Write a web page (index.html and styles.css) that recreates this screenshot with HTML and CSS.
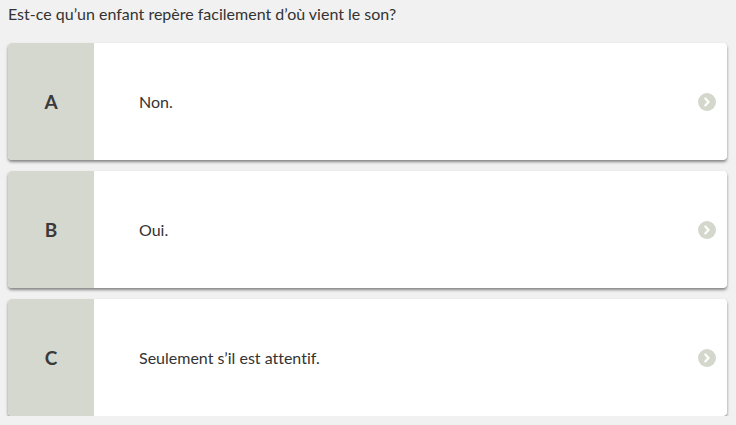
FILE: index.html
```html
<!DOCTYPE html>
<html lang="fr">
<head>
<meta charset="utf-8">
<link rel="stylesheet" href="styles.css">
</head>
<body>
<div class="quiz">
  <p class="question">Est-ce qu’un enfant repère facilement d’où vient le son?</p>
  <div class="answers">
    <div class="card">
      <div class="letter">A</div>
      <div class="text">Non.</div>
      <div class="arrow"><svg width="18" height="18" viewBox="0 0 18 18"><circle cx="9" cy="9" r="9" fill="#d4d7cc"/><path d="M7.3 5.6 L10.6 9 L7.3 12.4" fill="none" stroke="#fff" stroke-width="2.2" stroke-linecap="round" stroke-linejoin="round"/></svg></div>
    </div>
    <div class="card">
      <div class="letter">B</div>
      <div class="text">Oui.</div>
      <div class="arrow"><svg width="18" height="18" viewBox="0 0 18 18"><circle cx="9" cy="9" r="9" fill="#d4d7cc"/><path d="M7.3 5.6 L10.6 9 L7.3 12.4" fill="none" stroke="#fff" stroke-width="2.2" stroke-linecap="round" stroke-linejoin="round"/></svg></div>
    </div>
    <div class="card">
      <div class="letter">C</div>
      <div class="text">Seulement s’il est attentif.</div>
      <div class="arrow"><svg width="18" height="18" viewBox="0 0 18 18"><circle cx="9" cy="9" r="9" fill="#d4d7cc"/><path d="M7.3 5.6 L10.6 9 L7.3 12.4" fill="none" stroke="#fff" stroke-width="2.2" stroke-linecap="round" stroke-linejoin="round"/></svg></div>
    </div>
  </div>
</div>
</body>
</html>
```
FILE: styles.css
```css
html, body {
  margin: 0;
  padding: 0;
  background: #f1f1f1;
}
body {
  font-family: Lato, "Open Sans", sans-serif;
  color: #333;
  font-variant-ligatures: none;
}
.quiz {
  padding: 4px 9px 0 8px;
}
.question {
  margin: 0;
  font-size: 16px;
  line-height: 19px;
  color: #333;
}
.answers {
  margin-top: 20px;
  display: flex;
  flex-direction: column;
  gap: 11px;
}
.card {
  display: flex;
  align-items: center;
  height: 117px;
  background: #fff;
  border-radius: 4px;
  box-shadow: 0 2px 3px rgba(0,0,0,0.45);
  overflow: hidden;
}
.letter {
  width: 86px;
  align-self: stretch;
  background: #d5d8ce;
  display: flex;
  align-items: center;
  justify-content: center;
  font-size: 19px;
  font-weight: 700;
  color: #3a3a3a;
}
.text {
  flex: 1;
  padding-left: 45px;
  font-size: 16px;
  color: #333;
}
.arrow {
  width: 18px;
  height: 18px;
  margin-right: 11px;
  display: flex;
}
```
